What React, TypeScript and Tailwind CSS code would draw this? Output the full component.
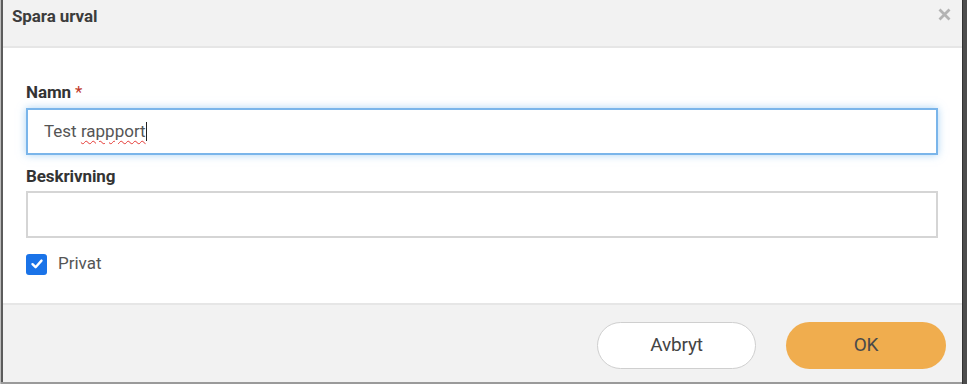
import React from "react";

export default function App() {
  const font = { fontFamily: "Roboto, 'Liberation Sans', sans-serif" } as React.CSSProperties;
  return (
    <div className="w-[967px] h-[384px] bg-[#9a9a9a] flex overflow-hidden" style={font}>
      <div className="w-[1px] shrink-0 bg-[#bdbdbd]" />
      <div className="w-[961px] h-[382px] shrink-0 border-l-2 border-[#5c5c5c] flex flex-col bg-white">
        {/* header */}
        <div className="h-[48px] shrink-0 bg-[#f2f2f2] border-b-2 border-[#e6e6e6] flex items-center justify-between pl-[9px] pr-[11px]">
          <span className="text-[17px] font-bold text-[#3c3c3c] tracking-[-0.1px] leading-none -mt-[14px]">Spara urval</span>
          <svg width="13" height="13" viewBox="0 0 13 13" className="-mt-[17px]">
            <path d="M1.5 1.5 L11.5 11.5 M11.5 1.5 L1.5 11.5" stroke="#b3b3b3" strokeWidth="2.8" strokeLinecap="butt" />
          </svg>
        </div>
        {/* body */}
        <div className="flex-1 pl-[23px] pr-[24px] pt-[34px] flex flex-col">
          <div className="h-[20px] leading-[20px] text-[17px] font-bold text-[#333] tracking-[-0.1px]">
            Namn <span className="text-[#c0392b] font-normal">*</span>
          </div>
          <div className="mt-[6px] h-[47px] border-2 border-[#7ab5ea] shadow-[0_0_8px_rgba(102,175,233,0.55)] flex items-center pl-[16px] text-[17px] text-[#555]">
            <span>Test&nbsp;</span>
            <span className="underline decoration-wavy decoration-[#e53935] decoration-1 underline-offset-[3px]">rappport</span>
            <span className="inline-block w-[1px] h-[19px] bg-[#222]" />
          </div>
          <div className="mt-[11px] h-[20px] leading-[20px] text-[17px] font-bold text-[#333] tracking-[-0.1px]">Beskrivning</div>
          <div className="mt-[5px] h-[47px] border-2 border-[#d5d5d5]" />
          <div className="mt-[15px] h-[22px] flex items-center">
            <div className="w-[21px] h-[21px] rounded-[3px] bg-[#1a73e8] flex items-center justify-center">
              <svg width="14" height="14" viewBox="0 0 14 14">
                <path d="M2.5 7.2 L5.6 10.2 L11.5 3.6" stroke="white" strokeWidth="2.4" fill="none" strokeLinecap="round" strokeLinejoin="round" />
              </svg>
            </div>
            <span className="ml-[11px] text-[17px] text-[#555]">Privat</span>
          </div>
        </div>
        {/* footer */}
        <div className="h-[79px] shrink-0 bg-[#f2f2f2] border-t-2 border-[#e6e6e6] flex items-start justify-end pt-[17px] pr-[16px] gap-[30px]">
          <button className="w-[159px] h-[47px] rounded-full bg-white border border-[#cfcfcf] text-[19px] text-[#444] tracking-[-0.2px]">Avbryt</button>
          <button className="w-[160px] h-[47px] rounded-full bg-[#f0ad4e] text-[19px] text-[#4a4a4a] tracking-[-0.2px]">OK</button>
        </div>
      </div>
      <div className="w-[5px] h-[384px] shrink-0 bg-[#4d4d4d] border-l border-[#333]" />
    </div>
  );
}
